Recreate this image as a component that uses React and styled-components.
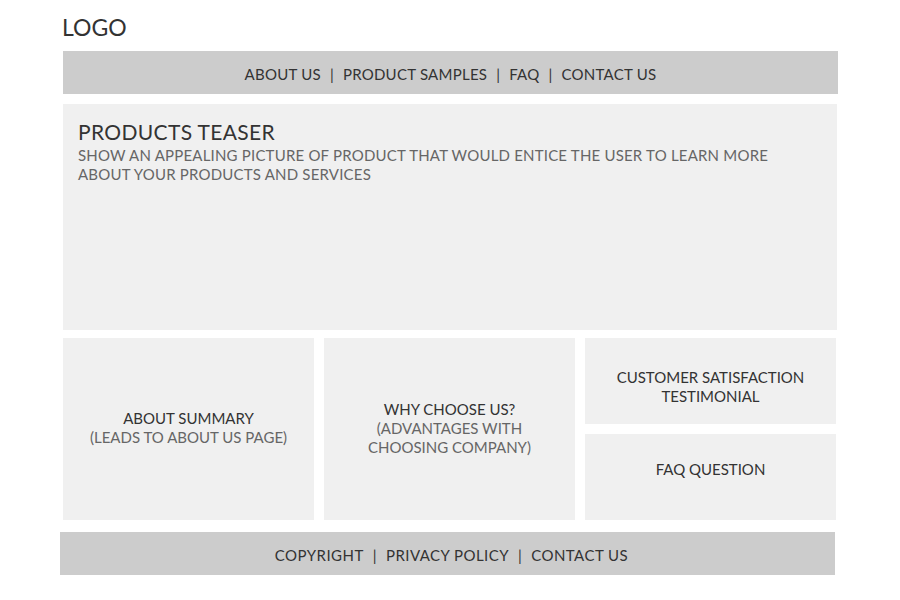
import React from 'react';
import styled, { createGlobalStyle } from 'styled-components';

const GlobalStyle = createGlobalStyle`
  body {
    margin: 0;
    background: #ffffff;
    font-family: 'Lato', 'Open Sans', sans-serif;
    color: #333333;
  }
`;

const Page = styled.div`
  width: 900px;
  height: 600px;
  padding: 13px 0 0 63px;
  box-sizing: border-box;
`;

const Logo = styled.div`
  font-size: 23px;
  line-height: 28px;
  color: #333;
  margin-left: -1px;
  height: 38px;
`;

const Bar = styled.nav`
  width: 775px;
  height: 43px;
  background: #cccccc;
  display: flex;
  align-items: center;
  justify-content: center;
  font-size: 15px;
  letter-spacing: ${(p) => p.$spacing || 0.25}px;
  color: #333;
  padding-top: 2px;
  box-sizing: border-box;
  margin-left: ${(p) => p.$shift || 0}px;
`;

const Sep = styled.span`
  margin: 0 9px;
  color: #333;
`;

const Teaser = styled.section`
  width: 774px;
  height: 226px;
  margin-top: 10px;
  background: #f0f0f0;
  padding: 15px 15px;
  box-sizing: border-box;
`;

const TeaserTitle = styled.h1`
  margin: 0;
  font-size: 21px;
  font-weight: 400;
  line-height: 25px;
  letter-spacing: 0.35px;
  color: #333;
`;

const TeaserText = styled.p`
  margin: 2px 0 0;
  font-size: 15px;
  line-height: 19px;
  letter-spacing: 0.2px;
  color: #666;
`;

const Grid = styled.div`
  width: 773px;
  margin-top: 8px;
  display: grid;
  grid-template-columns: repeat(3, 251px);
  grid-template-rows: 86px 86px;
  gap: 10px;
`;

const Card = styled.div`
  background: #f0f0f0;
  display: flex;
  flex-direction: column;
  align-items: center;
  justify-content: center;
  text-align: center;
  font-size: 15px;
  line-height: 19px;
  box-sizing: border-box;
  grid-row: ${(p) => (p.$tall ? 'span 2' : 'auto')};
  padding-top: ${(p) => p.$top || 0}px;
  padding-bottom: ${(p) => p.$bottom || 0}px;
`;

const CardTitle = styled.div`
  color: #333;
`;

const CardNote = styled.div`
  color: #666;
`;

const Footer = styled(Bar)`
  margin-top: 12px;
  padding-left: 8px;
`;

const Links = ({ items }) =>
  items.map((item, i) => (
    <React.Fragment key={item}>
      {i > 0 && <Sep>|</Sep>}
      <span>{item}</span>
    </React.Fragment>
  ));

export default function App() {
  return (
    <>
      <GlobalStyle />
      <Page>
        <Logo>LOGO</Logo>
        <Bar>
          <Links items={['ABOUT US', 'PRODUCT SAMPLES', 'FAQ', 'CONTACT US']} />
        </Bar>
        <Teaser>
          <TeaserTitle>PRODUCTS TEASER</TeaserTitle>
          <TeaserText>
            SHOW AN APPEALING PICTURE OF PRODUCT THAT WOULD ENTICE THE USER TO LEARN MORE
            <br />
            ABOUT YOUR PRODUCTS AND SERVICES
          </TeaserText>
        </Teaser>
        <Grid>
          <Card $tall $bottom={2}>
            <CardTitle>ABOUT SUMMARY</CardTitle>
            <CardNote>(LEADS TO ABOUT US PAGE)</CardNote>
          </Card>
          <Card $tall $bottom={2}>
            <CardTitle>WHY CHOOSE US?</CardTitle>
            <CardNote>
              (ADVANTAGES WITH
              <br />
              CHOOSING COMPANY)
            </CardNote>
          </Card>
          <Card $top={12}>
            <CardTitle>
              CUSTOMER SATISFACTION
              <br />
              TESTIMONIAL
            </CardTitle>
          </Card>
          <Card $bottom={16}>
            <CardTitle>FAQ QUESTION</CardTitle>
          </Card>
        </Grid>
        <Footer as="footer" $shift={-3} $spacing={0.45}>
          <Links items={['COPYRIGHT', 'PRIVACY POLICY', 'CONTACT US']} />
        </Footer>
      </Page>
    </>
  );
}
